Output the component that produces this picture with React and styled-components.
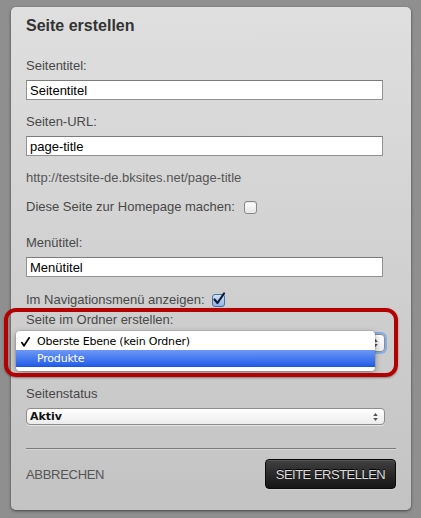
import React from "react";
import styled, { createGlobalStyle } from "styled-components";

const Global = createGlobalStyle`
  html, body {
    margin: 0;
    padding: 0;
    background: #8f8f8f;
  }
  body {
    font-family: "Liberation Sans", Arial, sans-serif;
    -webkit-font-smoothing: antialiased;
  }
`;

const Page = styled.div`
  padding: 7px 0 0 11px;
  width: 421px;
  height: 518px;
  box-sizing: border-box;
`;

const Panel = styled.div`
  position: relative;
  width: 400px;
  box-sizing: border-box;
  padding: 9px 15px 21px 15px;
  border-radius: 5px;
  background: linear-gradient(#dfdfdf, #c3c3c3);
  box-shadow: 0 1px 3px rgba(0, 0, 0, 0.55);
  display: flex;
  flex-direction: column;
`;

const Title = styled.h2`
  margin: 0;
  font-size: 16px;
  line-height: 20px;
  font-weight: bold;
  color: #333;
`;

const Label = styled.div`
  margin-top: ${(p) => p.$mt || 0}px;
  font-size: 13px;
  line-height: 16px;
  color: #484848;
`;

const Input = styled.input`
  margin-top: ${(p) => p.$mt || 6}px;
  width: 357px;
  height: 20px;
  box-sizing: border-box;
  border: 1px solid #929292;
  border-top-color: #7c7c7c;
  background: #fff;
  padding: 0 3px;
  font-family: "Liberation Sans", Arial, sans-serif;
  font-size: 13px;
  color: #000;
  outline: none;
`;

const Note = styled.div`
  margin-top: ${(p) => p.$mt || 0}px;
  font-size: 13px;
  line-height: 16px;
  color: #555;
`;

const CheckRow = styled.div`
  margin-top: ${(p) => p.$mt || 0}px;
  display: flex;
  align-items: center;
  gap: ${(p) => p.$gap || 8}px;
  font-size: 13px;
  line-height: 16px;
  color: #484848;
`;

const Box = styled.span`
  display: inline-block;
  width: 11px;
  height: 11px;
  border-radius: 3px;
  border: 1px solid #888;
  background: linear-gradient(#ffffff, #e6e6e6);
  box-shadow: inset 0 1px 1px rgba(0, 0, 0, 0.1);
`;

const CheckedBox = styled.span`
  position: relative;
  display: inline-block;
  width: 11px;
  height: 11px;
  border-radius: 3px;
  border: 1px solid #4a6fa6;
  background: linear-gradient(#cfe1f7, #8fb4e6);
  svg {
    position: absolute;
    left: -1px;
    top: -3px;
  }
`;

const FolderGroup = styled.div`
  position: relative;
  margin-top: 4px;
  display: flex;
  flex-direction: column;
`;

const Select = styled.div`
  position: relative;
  margin-top: 6px;
  width: 359px;
  height: ${(p) => p.$h || 18}px;
  box-sizing: border-box;
  border: 1px solid #8d8d8d;
  border-radius: 4px;
  background: linear-gradient(#ffffff, #ececec);
  box-shadow: ${(p) => (p.$focus ? "0 0 0 2px #83aee4" : "0 1px 0 rgba(255,255,255,0.5)")};
  display: flex;
  align-items: center;
  padding: 0 3px;
  font-family: "DejaVu Sans", sans-serif;
  font-size: 11px;
  font-weight: bold;
  color: #111;
  svg {
    position: absolute;
    right: 6px;
    top: 50%;
    transform: translateY(-50%);
  }
`;

const Menu = styled.div`
  position: absolute;
  left: -10px;
  top: 19px;
  width: 359px;
  box-sizing: border-box;
  padding: 2px 0 4px;
  background: rgba(255, 255, 255, 0.98);
  border-radius: 4px;
  box-shadow: 0 2px 6px rgba(0, 0, 0, 0.35), 0 0 0 1px rgba(0, 0, 0, 0.08);
  font-family: "DejaVu Sans", sans-serif;
  font-size: 11px;
  letter-spacing: -0.2px;
`;

const Option = styled.div`
  position: relative;
  height: 17px;
  line-height: 17px;
  padding-left: 21px;
  color: ${(p) => (p.$active ? "#fff" : "#000")};
  background: ${(p) => (p.$active ? "linear-gradient(#6e98f6, #2a64ea 85%, #1c55df)" : "transparent")};
  svg {
    position: absolute;
    left: 5px;
    top: 4px;
  }
`;

const Callout = styled.div`
  position: absolute;
  left: -22px;
  top: -4px;
  width: 394px;
  height: 69px;
  box-sizing: border-box;
  border: 4px solid #b30000;
  border-radius: 12px;
  box-shadow: 0 1px 2px rgba(0, 0, 0, 0.35);
  pointer-events: none;
`;

const Divider = styled.hr`
  margin: 23px 0 0 0;
  border: 0;
  height: 1px;
  background: #7a7a7a;
  box-shadow: 0 1px 0 rgba(255, 255, 255, 0.3);
`;

const Actions = styled.div`
  margin-top: 10px;
  display: flex;
  align-items: center;
  justify-content: space-between;
`;

const Cancel = styled.span`
  font-size: 13px;
  letter-spacing: -0.3px;
  color: #555;
`;

const Submit = styled.button`
  width: 131px;
  height: 30px;
  border: 1px solid #0a0a0a;
  border-radius: 4px;
  background: linear-gradient(#404040, #151515);
  box-shadow: inset 0 1px 0 rgba(255, 255, 255, 0.12), 0 1px 1px rgba(255, 255, 255, 0.25);
  font-family: "Liberation Sans", Arial, sans-serif;
  font-size: 13px;
  letter-spacing: -0.5px;
  color: #dcdcdc;
  text-shadow: 0 -1px 0 #000;
  padding: 0;
`;

const Arrows = () => (
  <svg width="5" height="9" viewBox="0 0 5 9">
    <path d="M2.5 0.5 L4.8 3.5 H0.2 Z" fill="#555" />
    <path d="M2.5 8.5 L4.8 5.5 H0.2 Z" fill="#555" />
  </svg>
);

const CheckMark = () => (
  <svg width="14" height="14" viewBox="0 0 14 14">
    <path d="M2.5 7.5 L5.5 11 L12 1.5" fill="none" stroke="#111c33" strokeWidth="2.2" strokeLinecap="round" strokeLinejoin="round" />
  </svg>
);

const MenuTick = () => (
  <svg width="9" height="10" viewBox="0 0 9 10">
    <path d="M0.8 5.6 L3 8.8 L8.2 0.8" fill="none" stroke="#000" strokeWidth="1.7" strokeLinecap="round" strokeLinejoin="round" />
  </svg>
);

export default function App() {
  return (
    <>
      <Global />
      <Page>
        <Panel>
          <Title>Seite erstellen</Title>

          <Label $mt={22}>Seitentitel:</Label>
          <Input defaultValue="Seitentitel" />

          <Label $mt={14}>Seiten-URL:</Label>
          <Input defaultValue="page-title" />

          <Note $mt={14}>http://testsite-de.bksites.net/page-title</Note>

          <CheckRow $mt={13} $gap={9}>
            Diese Seite zur Homepage machen:
            <Box />
          </CheckRow>

          <Label $mt={20}>Menütitel:</Label>
          <Input defaultValue="Menütitel" />

          <CheckRow $mt={15} $gap={7}>
            Im Navigationsmenü anzeigen:
            <CheckedBox>
              <CheckMark />
            </CheckedBox>
          </CheckRow>

          <FolderGroup>
            <Label>Seite im Ordner erstellen:</Label>
            {/* the open list covers the select's own value */}
            <Select $focus>
              <Arrows />
            </Select>
            <Menu>
              <Option>
                <MenuTick />
                Oberste Ebene (kein Ordner)
              </Option>
              <Option $active>Produkte</Option>
            </Menu>
            <Callout />
          </FolderGroup>

          <Label $mt={34}>Seitenstatus</Label>
          <Select $h={17}>
            Aktiv
            <Arrows />
          </Select>

          <Divider />

          <Actions>
            <Cancel>ABBRECHEN</Cancel>
            <Submit>SEITE ERSTELLEN</Submit>
          </Actions>
        </Panel>
      </Page>
    </>
  );
}
